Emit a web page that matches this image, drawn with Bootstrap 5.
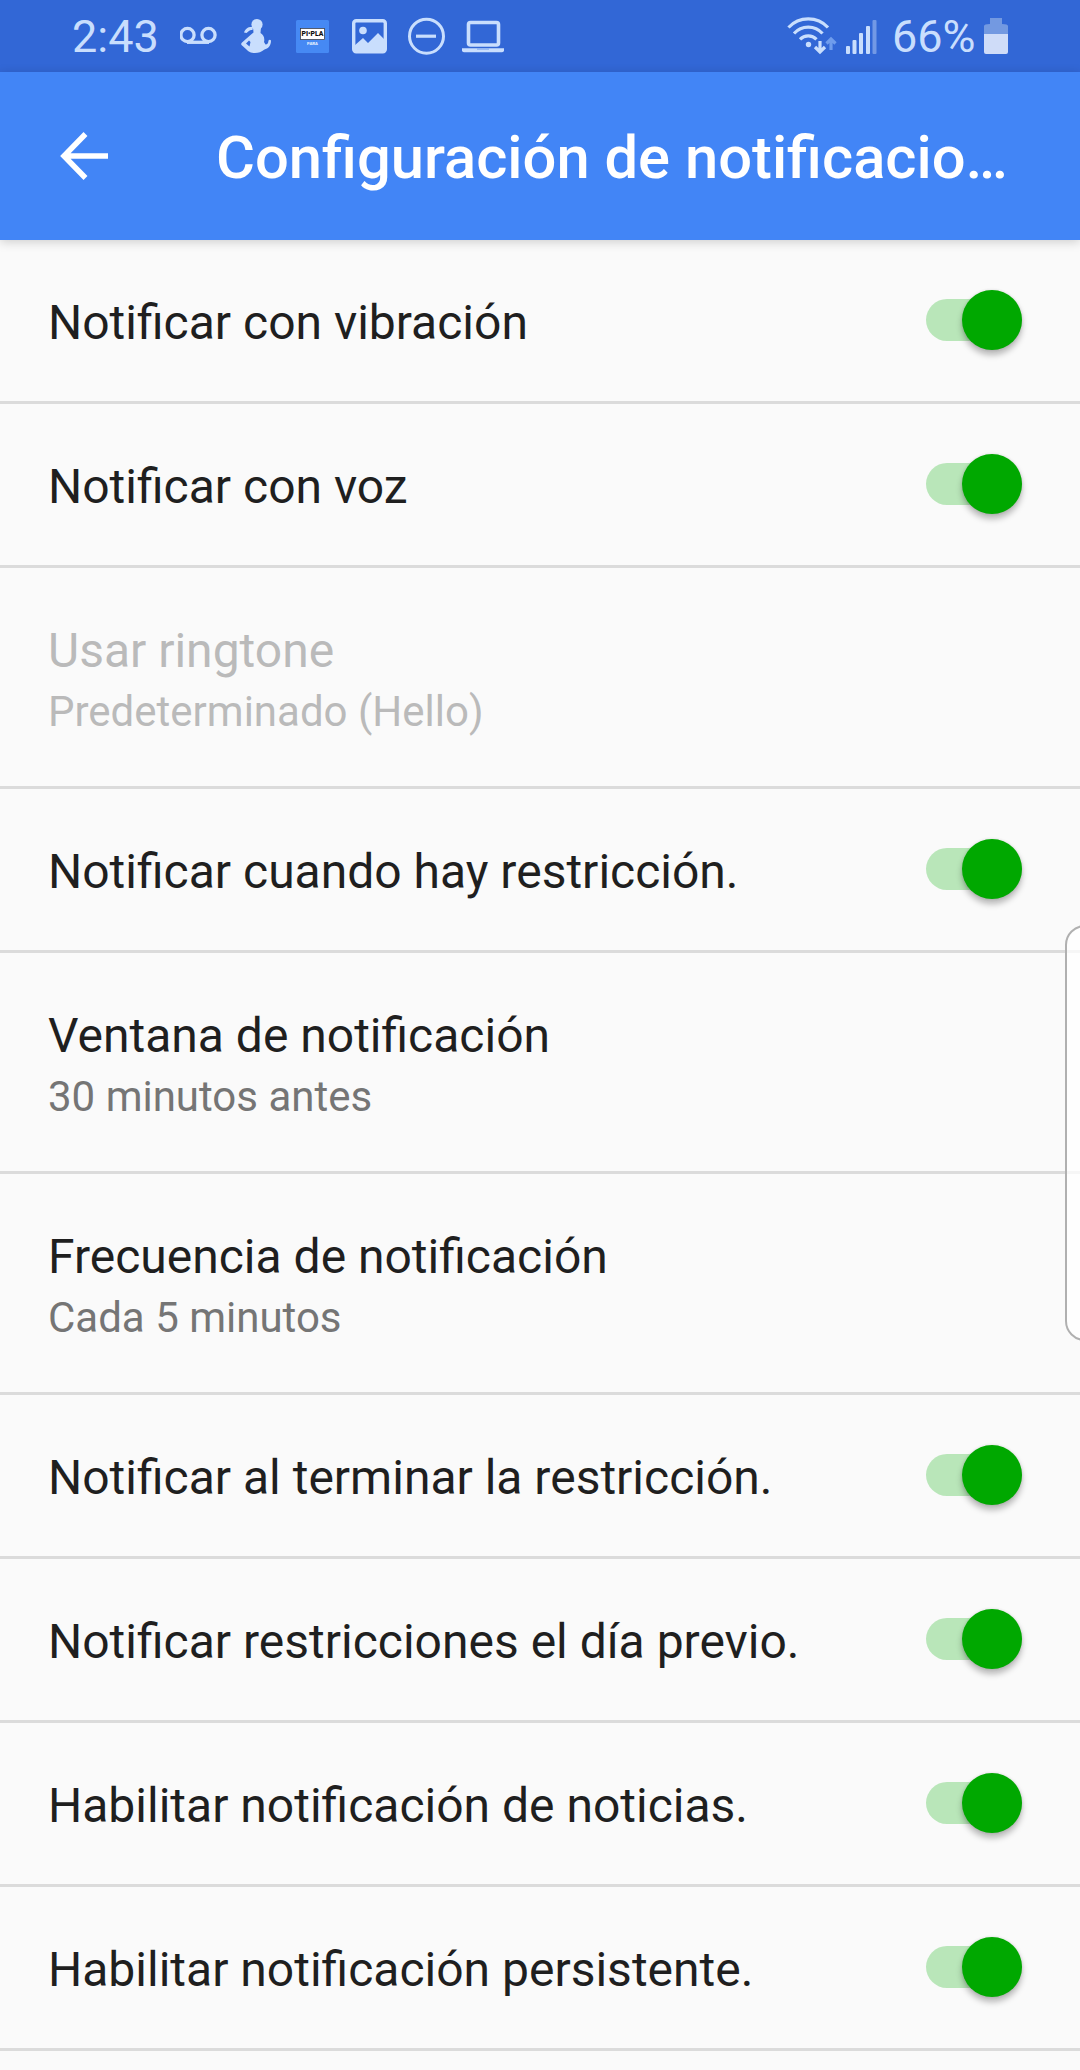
<!DOCTYPE html>
<html lang="es">
<head>
<meta charset="utf-8">
<meta name="viewport" content="width=device-width, initial-scale=1">
<title>Configuración de notificaciones</title>
<link href="https://cdn.jsdelivr.net/npm/bootstrap@5.3.0/dist/css/bootstrap.min.css" rel="stylesheet">
<style>
  body { font-family: Roboto, "Noto Sans", sans-serif; background: #fafafa; color: #1f1f1f; width: 1080px; height: 2070px; overflow: hidden; }
  svg { display: block; flex: none; }
  .statusbar { height: 72px; background: #3267d6; color: #c9defd; padding: 0 72px; }
  .status-text { font-size: 45px; line-height: 70px; padding-top: 2px; flex: none; }
  .clock { width: 108px; }
  .charge { width: 92px; }
  .appbar { height: 168px; background: #4285f6; color: #fff; padding-left: 60px; box-shadow: 0 2px 10px rgba(0,0,0,.18); z-index: 2; }
  .appbar-title { font-size: 59.7px; line-height: 70px; font-weight: 500; margin-left: 107px; padding-top: 4px; }
  .pref { border: 0; border-bottom: 3px solid #dbdbdb; border-radius: 0 !important; background: transparent; color: inherit; padding: 55px 58px 0 48px; height: 164px; }
  .pref-tall { height: 221px; }
  .pref-name { font-size: 48px; line-height: 56px; }
  .pref-note { font-size: 42px; line-height: 50px; margin-top: 8px; color: #757575; }
  .pref-off, .pref-off .pref-note { color: #bababa; }
  .form-check-input.toggle { width: 96px; height: 42px; border: 0; border-radius: 21px; margin: 4px 0 0; background: #b9e6b9 none; position: relative; opacity: 1; }
  .form-check-input.toggle:checked { background: #b9e6b9 none; }
  .toggle::after { content: ""; position: absolute; right: 0; top: -9px; width: 60px; height: 60px; border-radius: 50%; background: #00a800; box-shadow: 0 5px 6px rgba(0,0,0,.27), 0 0 3px rgba(0,0,0,.12); }
  .edge-panel { position: absolute; left: 1065px; top: 925px; width: 40px; height: 416px; border: 2px solid #b0b0b0; border-radius: 20px; background: rgba(255,255,255,.75); z-index: 3; }
</style>
</head>
<body class="position-relative">
<header class="statusbar d-flex justify-content-between align-items-center">
  <div class="d-flex align-items-center">
    <span class="status-text clock">2:43</span>
    <svg width="340" height="72" viewBox="180 0 340 72" fill="none" stroke="#c9defd">
      <g stroke-width="3.300"><circle cx="187.500" cy="35" r="6.600"/><circle cx="208.500" cy="35" r="6.600"/><path d="M187 42.300h22"/></g>
      <g fill="#c9defd" stroke="none">
        <circle cx="257" cy="24.500" r="5.600"/>
        <path d="M253 27h8l-.5 6c3 2 4.500 5 3.500 9l1.500 2.500c2 0 2.800-1.500 3-4q1.300-1.600 2.500 0c0 5.500-3 8-6.500 9-3 2.500-6 3.500-9.500 3.500-4.500 0-6.500-1.500-8.500-3.500l-5-4.500q-.8-1.500.5-2.500l8.500-7.500c1-1 2-1.600 3-2.500zM246 43.500l3.500 3 1-4.500-1.500-1.500z" fill-rule="evenodd"/>
        <path d="M244 32.500c1.500-4 4-6 9-5.500l-.5 3c-2.500-.5-4 1-6 3z"/>
      </g>
      <rect x="296" y="20" width="33" height="33" rx="1.500" fill="#4689f4" stroke="none"/>
      <rect x="300.500" y="28.500" width="24" height="11" fill="#fff" stroke="#333" stroke-width=".7"/>
      <g stroke="none" font-family="Roboto, sans-serif" font-weight="900" text-anchor="middle">
        <text x="312.500" y="36.200" font-size="6.600" textLength="22" lengthAdjust="spacingAndGlyphs" fill="#111">PI•PLA</text>
        <text x="312.500" y="45.300" font-size="4.200" fill="#e4efff">PARA</text>
      </g>
      <rect x="353.700" y="20.700" width="31.600" height="31" rx="2.500" stroke-width="3.400"/>
      <circle cx="363" cy="30.500" r="3.800" fill="#c9defd" stroke="none"/>
      <path d="M354 46l9-8 5 5 10-10 7 7v12h-31z" fill="#c9defd" stroke="none"/>
      <circle cx="426.500" cy="36.200" r="17" stroke-width="3"/><path d="M416 36.200h20" stroke-width="3.200"/>
      <rect x="468.500" y="22.500" width="30" height="22.500" rx="2" stroke-width="3.600"/>
      <path d="M462 48.300h42v2q0 2-2 2h-38q-2 0-2-2z" fill="#c9defd" stroke="none"/><path d="M477 49h12" stroke="#8eb2f0" stroke-width="1.500"/>
    </svg>
  </div>
  <div class="d-flex align-items-center">
    <svg width="106" height="72" viewBox="786 0 106 72" fill="none" stroke="#c9defd" stroke-width="3.200">
      <path d="M788.500 27.500a27 27 0 0 1 39.500 0M794 33.500a19 19 0 0 1 28.500 0M800 39.300a11.500 11.500 0 0 1 16.500 0"/>
      <circle cx="808.500" cy="44.500" r="2.700" fill="#c9defd" stroke="none"/>
      <path d="M820 41v11M815 47l5 5 5-5"/>
      <path d="M831 50V39M826.500 43.500l4.500-4.500 4.500 4.500" stroke="#6f9cec"/>
      <g fill="#c9defd" stroke="none"><rect x="846" y="46" width="4" height="8" rx="1"/><rect x="852.500" y="40" width="4" height="14" rx="1"/><rect x="859" y="33" width="4" height="21" rx="1"/><rect x="866" y="26" width="4" height="28" rx="1"/><rect x="872.500" y="20" width="4" height="34" rx="1" fill="#7399e5"/></g>
    </svg>
    <span class="status-text charge">66%</span>
    <svg width="24" height="72" viewBox="984 0 24 72"><path d="M990 24v-6h12v6q6 0 6 2v8h-24v-8q0-2 6-2z" fill="#7399e1"/><path d="M984 34h24v18q0 2-2 2h-20q-2 0-2-2z" fill="#cfdcf8"/></svg>
  </div>
</header>
<nav class="appbar d-flex align-items-center position-relative">
  <svg width="49" height="50" viewBox="0 0 49 50" fill="none" stroke="#fff" stroke-width="5.500"><path d="M25.500 3L4 25l21.500 22M5 25h43"/></svg>
  <h1 class="appbar-title mb-0 text-nowrap">Configuración de notificacio…</h1>
</nav>
<main class="list-group rounded-0">
  <label class="list-group-item pref d-flex justify-content-between"><span class="pref-name">Notificar con vibración</span><input class="form-check-input toggle" type="checkbox" checked></label>
  <label class="list-group-item pref d-flex justify-content-between"><span class="pref-name">Notificar con voz</span><input class="form-check-input toggle" type="checkbox" checked></label>
  <div class="list-group-item pref pref-tall pref-off"><div class="pref-name">Usar ringtone</div><div class="pref-note">Predeterminado (Hello)</div></div>
  <label class="list-group-item pref d-flex justify-content-between"><span class="pref-name">Notificar cuando hay restricción.</span><input class="form-check-input toggle" type="checkbox" checked></label>
  <div class="list-group-item pref pref-tall"><div class="pref-name">Ventana de notificación</div><div class="pref-note">30 minutos antes</div></div>
  <div class="list-group-item pref pref-tall"><div class="pref-name">Frecuencia de notificación</div><div class="pref-note">Cada 5 minutos</div></div>
  <label class="list-group-item pref d-flex justify-content-between"><span class="pref-name">Notificar al terminar la restricción.</span><input class="form-check-input toggle" type="checkbox" checked></label>
  <label class="list-group-item pref d-flex justify-content-between"><span class="pref-name">Notificar restricciones el día previo.</span><input class="form-check-input toggle" type="checkbox" checked></label>
  <label class="list-group-item pref d-flex justify-content-between"><span class="pref-name">Habilitar notificación de noticias.</span><input class="form-check-input toggle" type="checkbox" checked></label>
  <label class="list-group-item pref d-flex justify-content-between"><span class="pref-name">Habilitar notificación persistente.</span><input class="form-check-input toggle" type="checkbox" checked></label>
</main>
<div class="edge-panel"></div>
<script src="https://cdn.jsdelivr.net/npm/bootstrap@5.3.0/dist/js/bootstrap.bundle.min.js"></script>
</body>
</html>
